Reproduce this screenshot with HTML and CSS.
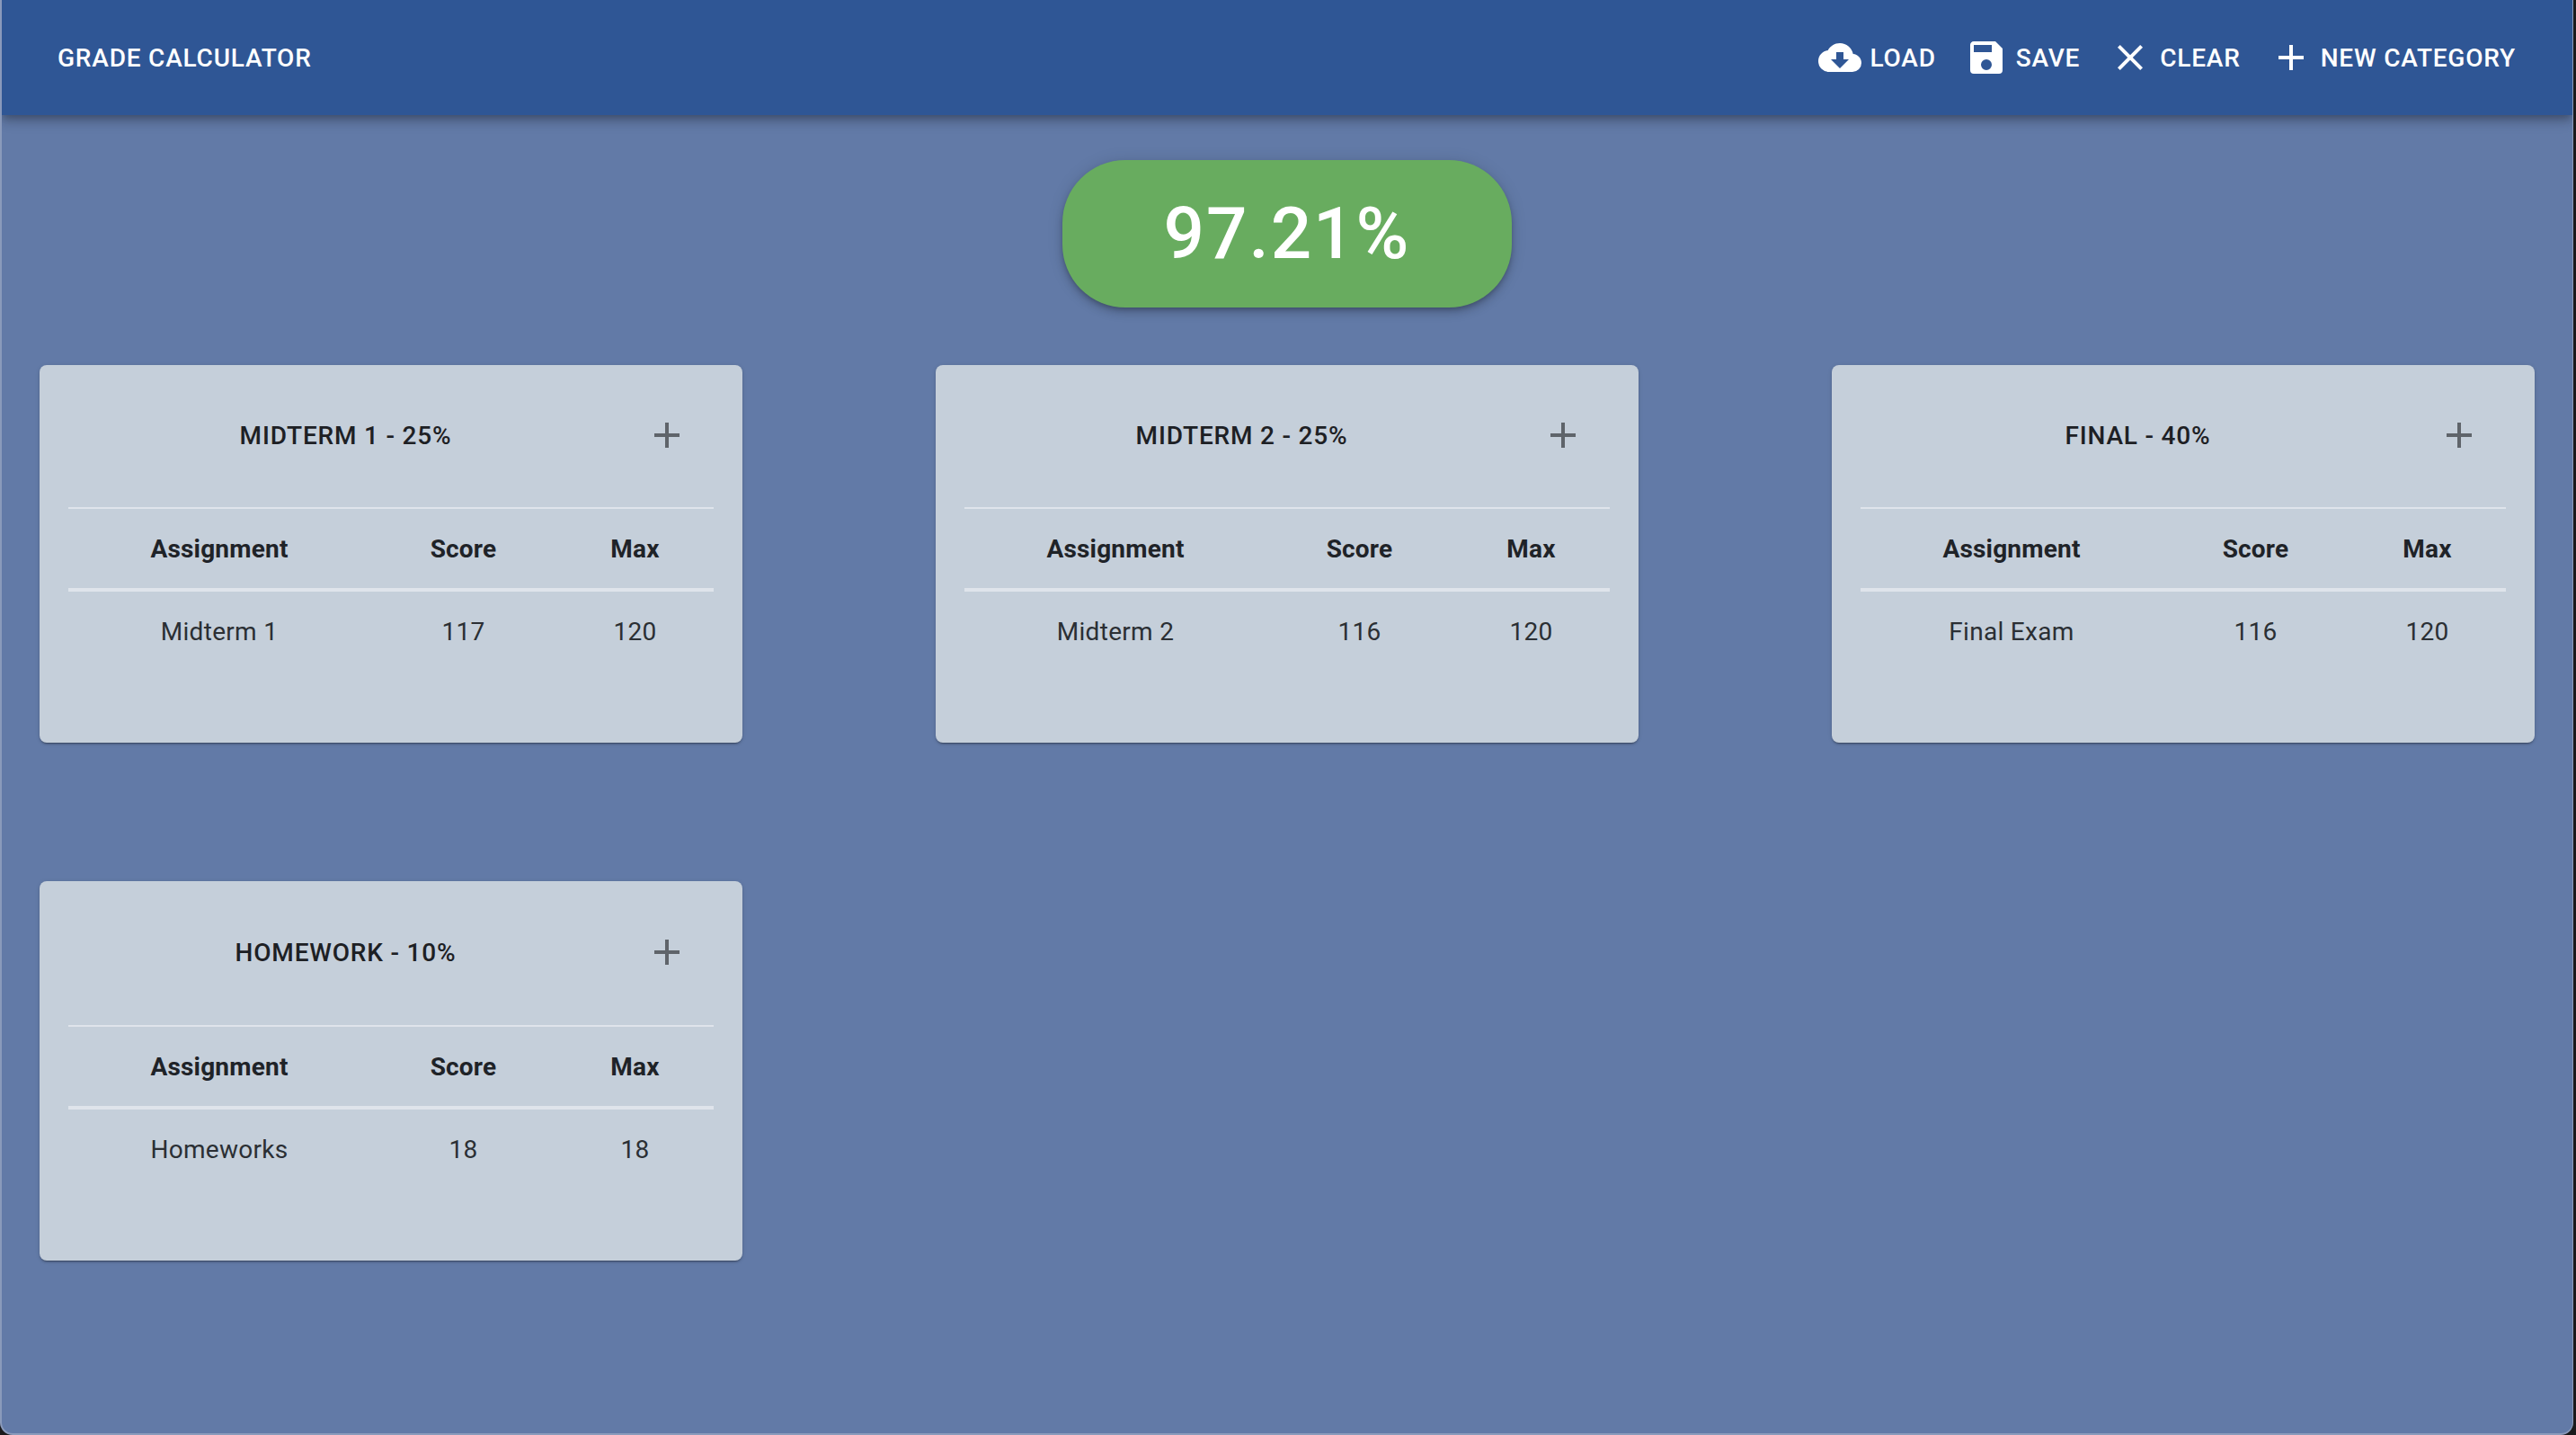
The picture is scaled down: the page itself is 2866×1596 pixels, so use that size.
FILE: index.html
```html
<!DOCTYPE html>
<html lang="en">
<head>
  <meta charset="UTF-8" />
  <title>Grade Calculator</title>
  <link rel="stylesheet" href="styles.css">
</head>
<body>
  <div class="app">
    <header class="toolbar">
      <div class="toolbar-title">Grade Calculator</div>
      <nav class="toolbar-actions">
        <button class="btn">
          <svg class="icon" viewBox="0 0 24 24"><path d="M17,13L12,18L7,13H10V9H14V13M19.35,10.03C18.67,6.59 15.64,4 12,4C9.11,4 6.6,5.64 5.35,8.03C2.34,8.36 0,10.9 0,14A6,6 0 0,0 6,20H19A5,5 0 0,0 24,15C24,12.36 21.95,10.22 19.35,10.03Z"/></svg>
          Load
        </button>
        <button class="btn">
          <svg class="icon" viewBox="0 0 24 24"><path d="M15,9H5V5H15M12,19A3,3 0 0,1 9,16A3,3 0 0,1 12,13A3,3 0 0,1 15,16A3,3 0 0,1 12,19M17,3H5C3.89,3 3,3.9 3,5V19A2,2 0 0,0 5,21H19A2,2 0 0,0 21,19V7L17,3Z"/></svg>
          Save
        </button>
        <button class="btn">
          <svg class="icon" viewBox="0 0 24 24"><path d="M19,6.41L17.59,5L12,10.59L6.41,5L5,6.41L10.59,12L5,17.59L6.41,19L12,13.41L17.59,19L19,17.59L13.41,12L19,6.41Z"/></svg>
          Clear
        </button>
        <button class="btn">
          <svg class="icon" viewBox="0 0 24 24"><path d="M19,13H13V19H11V13H5V11H11V5H13V11H19V13Z"/></svg>
          New Category
        </button>
      </nav>
    </header>

    <main class="content">
      <div class="total">97.21%</div>

      <div class="cards">
        <section class="card">
          <div class="card-head">
            <h2 class="card-title">Midterm 1 - 25%</h2>
            <button class="add"><svg class="icon" viewBox="0 0 24 24"><path d="M19,13H13V19H11V13H5V11H11V5H13V11H19V13Z"/></svg></button>
          </div>
          <table class="grades">
            <thead><tr><th>Assignment</th><th>Score</th><th>Max</th></tr></thead>
            <tbody><tr><td>Midterm 1</td><td>117</td><td>120</td></tr></tbody>
          </table>
        </section>

        <section class="card">
          <div class="card-head">
            <h2 class="card-title">Midterm 2 - 25%</h2>
            <button class="add"><svg class="icon" viewBox="0 0 24 24"><path d="M19,13H13V19H11V13H5V11H11V5H13V11H19V13Z"/></svg></button>
          </div>
          <table class="grades">
            <thead><tr><th>Assignment</th><th>Score</th><th>Max</th></tr></thead>
            <tbody><tr><td>Midterm 2</td><td>116</td><td>120</td></tr></tbody>
          </table>
        </section>

        <section class="card">
          <div class="card-head">
            <h2 class="card-title">Final - 40%</h2>
            <button class="add"><svg class="icon" viewBox="0 0 24 24"><path d="M19,13H13V19H11V13H5V11H11V5H13V11H19V13Z"/></svg></button>
          </div>
          <table class="grades">
            <thead><tr><th>Assignment</th><th>Score</th><th>Max</th></tr></thead>
            <tbody><tr><td>Final Exam</td><td>116</td><td>120</td></tr></tbody>
          </table>
        </section>

        <section class="card card-last">
          <div class="card-head">
            <h2 class="card-title">Homework - 10%</h2>
            <button class="add"><svg class="icon" viewBox="0 0 24 24"><path d="M19,13H13V19H11V13H5V11H11V5H13V11H19V13Z"/></svg></button>
          </div>
          <table class="grades">
            <thead><tr><th>Assignment</th><th>Score</th><th>Max</th></tr></thead>
            <tbody><tr><td>Homeworks</td><td>18</td><td>18</td></tr></tbody>
          </table>
        </section>
      </div>
    </main>
  </div>
</body>
</html>
```
FILE: styles.css
```css
html, body {
  margin: 0;
  height: 100%;
  background: #1a1a1c;
  overflow: hidden;
}
.app {
  height: 1594px;
  margin-right: 3px;
  border-left: 2px solid #8a9abb;
  border-right: 1px solid #8a9abb;
  border-bottom: 2px solid #8a9abb;
  border-radius: 0 0 14px 14px;
  background: #627aa7;
  font-family: Roboto, sans-serif;
  overflow: hidden;
}
.toolbar {
  display: flex;
  align-items: center;
  justify-content: space-between;
  height: 128px;
  padding: 0 63px 0 62px;
  background: #2f5695;
  color: #fff;
  box-shadow: 0 4px 8px -2px rgba(0, 0, 0, .2), 0 8px 10px 0 rgba(0, 0, 0, .14), 0 2px 20px 0 rgba(0, 0, 0, .12);
  position: relative;
}
.toolbar-title {
  font-size: 28px;
  font-weight: 500;
  letter-spacing: .8px;
  text-transform: uppercase;
}
.toolbar-actions {
  display: flex;
  gap: 32px;
}
.btn {
  display: flex;
  align-items: center;
  gap: 9px;
  padding: 0;
  border: none;
  background: none;
  color: #fff;
  font-family: inherit;
  font-size: 28px;
  font-weight: 500;
  letter-spacing: .8px;
  text-transform: uppercase;
}
.icon {
  display: block;
  width: 48px;
  height: 48px;
  fill: currentColor;
}
.content {
  padding: 50px 42px 0;
}
.total {
  width: 500px;
  height: 164px;
  margin: 0 auto 64px;
  border-radius: 70px;
  background: #68ac5f;
  color: #fff;
  font-size: 80px;
  font-weight: 500;
  letter-spacing: 2px;
  line-height: 164px;
  text-align: center;
  box-shadow: 0 3px 5px -1px rgba(0, 0, 0, .2), 0 6px 10px 0 rgba(0, 0, 0, .14), 0 1px 18px 0 rgba(0, 0, 0, .12);
}
.cards {
  display: grid;
  grid-template-columns: repeat(3, 782px);
  justify-content: space-between;
  align-items: start;
  row-gap: 154px;
}
.card {
  height: 420px;
  padding: 0 32px;
  border-radius: 8px;
  background: #c5cfda;
  box-shadow: 0 3px 1px -2px rgba(0, 0, 0, .2), 0 2px 2px 0 rgba(0, 0, 0, .14), 0 1px 5px 0 rgba(0, 0, 0, .12);
}
.card-last {
  height: 422px;
}
.card-head {
  display: flex;
  align-items: center;
  height: 160px;
  padding-bottom: 2px;
  border-bottom: 2px solid #dfe4eb;
  box-sizing: border-box;
}
.card-last .card-head {
  height: 162px;
}
.card-title {
  flex: 1;
  margin: 0;
  padding-left: 1px;
  color: #1d2024;
  font-size: 28px;
  font-weight: 500;
  letter-spacing: .8px;
  text-align: center;
  text-transform: uppercase;
}
.add {
  width: 102px;
  padding: 0 0 0 26px;
  border: none;
  background: none;
  color: #5f646a;
  box-sizing: border-box;
}
.grades {
  width: 100%;
  table-layout: fixed;
  border-collapse: separate;
  border-spacing: 0;
  color: #1f2328;
  font-size: 28px;
  text-align: center;
}
.grades th:nth-child(1) { width: 336px; }
.grades th:nth-child(2) { width: 207px; }
.grades th {
  box-sizing: border-box;
  height: 92px;
  padding: 0;
  border-bottom: 4px solid #dfe4eb;
  font-weight: 700;
  letter-spacing: .2px;
}
.grades td {
  box-sizing: border-box;
  height: 88px;
  padding: 0;
  color: #2b2f34;
  font-weight: 400;
  letter-spacing: .3px;
}
```
